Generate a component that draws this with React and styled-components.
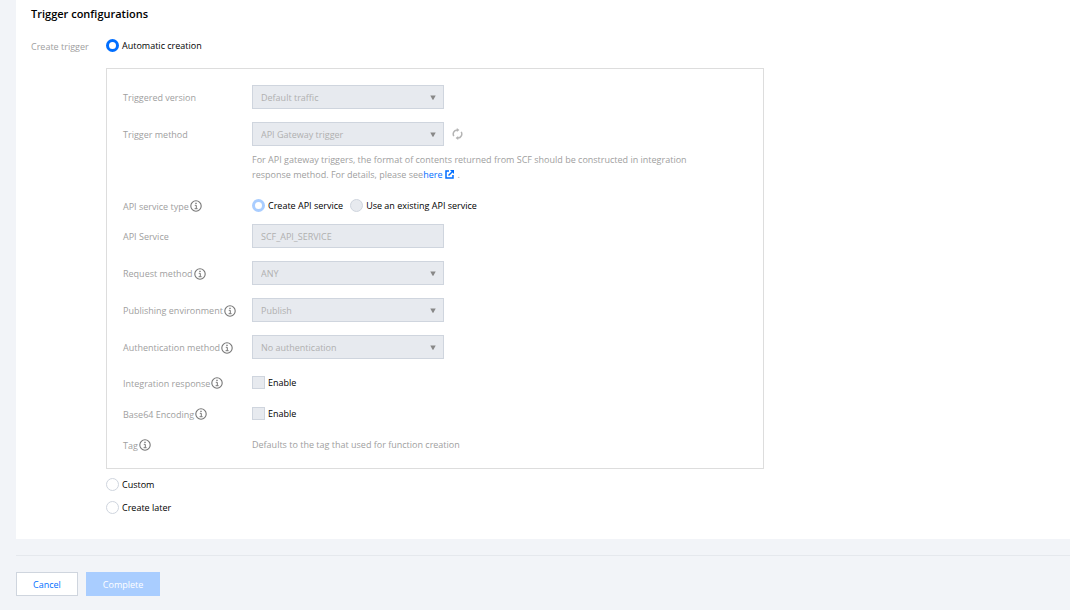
import React, { useState } from 'react';
import styled, { createGlobalStyle } from 'styled-components';

const App = () => {
  const [mode, setMode] = useState('auto');

  return (
    <>
      <GlobalStyle />
      <Page>
        <Panel>
          <Title>Trigger configurations</Title>
          <TriggerRow>
            <TriggerLabel id="create-trigger">Create trigger</TriggerLabel>
            <Modes role="radiogroup" aria-labelledby="create-trigger">
              <Option>
                <Radio name="mode" checked={mode === 'auto'} onChange={() => setMode('auto')} />
                Automatic creation
              </Option>
              <Box>
                <Row>
                  <Label htmlFor="version">Triggered version</Label>
                  <Select id="version" value="Default traffic" />
                </Row>
                <Row $space={6}>
                  <Label htmlFor="method">Trigger method</Label>
                  <Control>
                    <Select id="method" value="API Gateway trigger" />
                    <RefreshButton type="button" aria-label="Refresh">
                      <RefreshIcon />
                    </RefreshButton>
                  </Control>
                </Row>
                <Row $space={16}>
                  <span />
                  <Help>
                    For API gateway triggers, the format of contents returned from SCF should be constructed in
                    integration response method. For details, please see<Link href="#">here<LinkIcon /></Link>.
                  </Help>
                </Row>
                <Row $space={11}>
                  <Label as="span" id="service-type">API service type<InfoIcon /></Label>
                  <Control role="radiogroup" aria-labelledby="service-type">
                    <Option>
                      <Radio name="service" defaultChecked disabled />
                      Create API service
                    </Option>
                    <Option>
                      <Radio name="service" disabled />
                      Use an existing API service
                    </Option>
                  </Control>
                </Row>
                <Row>
                  <Label htmlFor="service-name">API Service</Label>
                  <Input id="service-name" defaultValue="SCF_API_SERVICE" disabled />
                </Row>
                <Row>
                  <Label htmlFor="request">Request method<InfoIcon /></Label>
                  <Select id="request" value="ANY" />
                </Row>
                <Row>
                  <Label htmlFor="environment">Publishing environment<InfoIcon /></Label>
                  <Select id="environment" value="Publish" />
                </Row>
                <Row $space={16}>
                  <Label htmlFor="authentication">Authentication method<InfoIcon /></Label>
                  <Select id="authentication" value="No authentication" />
                </Row>
                <Row $space={16}>
                  <Label as="span">Integration response<InfoIcon /></Label>
                  <Option>
                    <Checkbox aria-label="Enable integration response" disabled />
                    Enable
                  </Option>
                </Row>
                <Row $space={16}>
                  <Label as="span">Base64 Encoding<InfoIcon /></Label>
                  <Option>
                    <Checkbox aria-label="Enable Base64 encoding" disabled />
                    Enable
                  </Option>
                </Row>
                <Row $space={0}>
                  <Label as="span">Tag<InfoIcon /></Label>
                  <Help>Defaults to the tag that used for function creation</Help>
                </Row>
              </Box>
              <Option>
                <Radio name="mode" checked={mode === 'custom'} onChange={() => setMode('custom')} />
                Custom
              </Option>
              <Option>
                <Radio name="mode" checked={mode === 'later'} onChange={() => setMode('later')} />
                Create later
              </Option>
            </Modes>
          </TriggerRow>
        </Panel>
        <Footer>
          <Button type="button">Cancel</Button>
          <Button type="button" $primary disabled>Complete</Button>
        </Footer>
      </Page>
    </>
  );
};

const Select = ({ id, value }) => (
  <SelectWrap>
    <SelectField id={id} defaultValue={value} disabled>
      <option>{value}</option>
    </SelectField>
    <Arrow viewBox="0 0 6 5" aria-hidden="true">
      <path d="M0.3 0.5h5.4L3.4 4.8h-.8z" fill="#888" />
    </Arrow>
  </SelectWrap>
);

const InfoIcon = () => (
  <svg width="12" height="12" viewBox="0 0 12 12" fill="none" aria-hidden="true">
    <circle cx="6" cy="6" r="5.2" stroke="#777" strokeWidth="1.1" />
    <path d="M4.8 5.3h1.5v3.2M4.6 8.7h3" stroke="#777" />
    <path d="M5.3 2.7h1.4v1.4H5.3z" fill="#777" />
  </svg>
);

const RefreshIcon = () => (
  <svg width="11" height="12" viewBox="0 0 11 12" fill="none" aria-hidden="true">
    <path d="M1.8 8.2A4.2 4.2 0 0 1 5 1.9M9.2 3.8A4.2 4.2 0 0 1 6 10.1" stroke="#b4b4b4" strokeWidth="1.5" />
    <path d="M4.8 0l2.6 2-2.6 2zM6.2 8v4L3.6 10z" fill="#b4b4b4" />
  </svg>
);

const LinkIcon = () => (
  <svg width="9" height="9" viewBox="0 0 9 9" fill="none" aria-hidden="true">
    <path d="M4 1H1v7h7V5" stroke="#006eff" strokeWidth="1.5" />
    <path d="M3.5 5.5L7.5 1.5" stroke="#006eff" strokeWidth="1.5" />
    <path d="M5 0h4v4z" fill="#006eff" />
  </svg>
);

const GlobalStyle = createGlobalStyle`
  * {
    box-sizing: border-box;
  }

  body {
    margin: 0;
    background: #f2f4f8;
    color: #000;
    font: 9px/15px 'Open Sans', 'Noto Sans', sans-serif;
  }

  input, select, button {
    font: inherit;
    margin: 0;
  }
`;

const Page = styled.main`
  padding-left: 16px;
`;

const Panel = styled.section`
  background: #fff;
  padding: 6px 15px 24px;
`;

const Title = styled.h2`
  margin: 0 0 16px;
  font-size: 11px;
  line-height: 16px;
  font-weight: 600;
`;

const TriggerRow = styled.div`
  display: flex;
  align-items: flex-start;
`;

const TriggerLabel = styled.span`
  flex: 0 0 75px;
  padding-top: 1px;
  color: #a0a0a0;
`;

const Modes = styled.div`
  flex: 1;
  min-width: 0;
  display: flex;
  flex-direction: column;
  align-items: flex-start;
  gap: 8px;
`;

const Option = styled.label`
  display: inline-flex;
  align-items: center;
  gap: 3px;
`;

const Radio = styled.input.attrs({ type: 'radio' })`
  appearance: none;
  width: 13px;
  height: 13px;
  border: 1px solid #cfd5de;
  border-radius: 50%;
  background: #fff;

  &:disabled {
    background: #e7eaef;
  }

  &:checked {
    border: 3px solid #006eff;
    background: #fff;
  }

  &:checked:disabled {
    border-color: #a9cdff;
  }
`;

const Checkbox = styled.input.attrs({ type: 'checkbox' })`
  appearance: none;
  width: 13px;
  height: 13px;
  border: 1px solid #cfd5de;
  background: #e7eaef;
`;

const Box = styled.div`
  width: 100%;
  max-width: 658px;
  margin-top: 7px;
  padding: 16px;
  border: 1px solid #ddd;
`;

const Row = styled.div`
  display: grid;
  grid-template-columns: 129px minmax(0, 1fr);
  align-items: center;
  margin-bottom: ${({ $space = 13 }) => $space}px;
`;

const Label = styled.label`
  display: flex;
  align-items: center;
  gap: 1px;
  height: 15px;
  padding-top: 1px;
  color: #a0a0a0;
  white-space: nowrap;
`;

const Control = styled.div`
  display: flex;
  align-items: center;
  gap: 7px;
`;

const Help = styled.p`
  margin: 0;
  max-width: 460px;
  color: #a0a0a0;
`;

const Link = styled.a`
  color: #006eff;
  text-decoration: none;

  svg {
    vertical-align: -1px;
    margin: 0 3px;
  }
`;

const Input = styled.input`
  width: 192px;
  height: 24px;
  padding: 0 8px;
  border: 1px solid #cfd5de;
  border-radius: 0;
  background: #e7eaef;
  color: #b0b0b0;
  opacity: 1;
`;

const SelectWrap = styled.div`
  position: relative;
  width: 192px;
  height: 24px;
`;

const SelectField = styled(Input).attrs({ as: 'select' })`
  display: block;
  appearance: none;
`;

const Arrow = styled.svg`
  position: absolute;
  right: 8px;
  top: 10px;
  width: 6px;
  height: 5px;
  pointer-events: none;
`;

const RefreshButton = styled.button`
  display: flex;
  padding: 0 1px;
  border: 0;
  background: none;
`;

const Footer = styled.footer`
  display: flex;
  gap: 8px;
  margin-top: 16px;
  padding: 16px 0;
  border-top: 1px solid #e5e8ed;
`;

const Button = styled.button`
  height: 24px;
  padding: 0 16px;
  border: 1px solid ${({ $primary }) => ($primary ? '#a9cdff' : '#cfd5de')};
  background: ${({ $primary }) => ($primary ? '#a9cdff' : '#fff')};
  color: ${({ $primary }) => ($primary ? '#fff' : '#006eff')};
`;

export default App;
